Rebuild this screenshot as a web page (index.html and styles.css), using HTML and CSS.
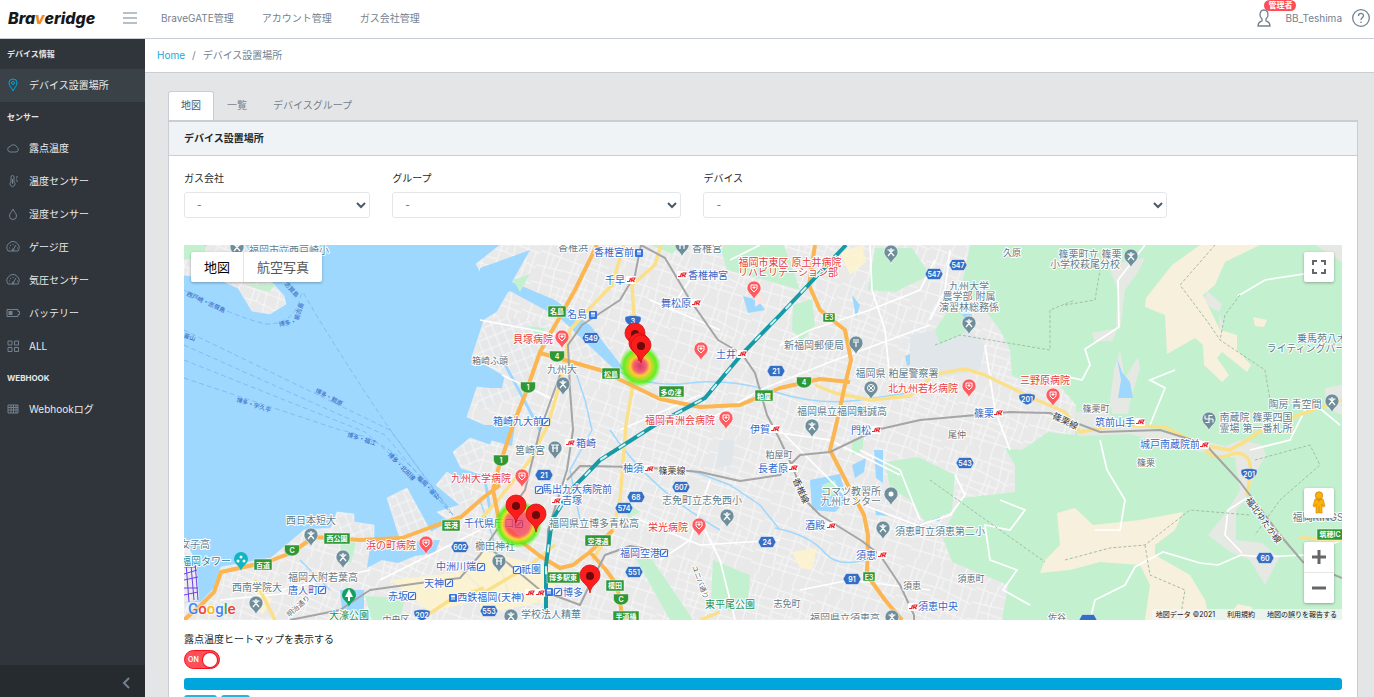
FILE: index.html
```html
<!DOCTYPE html>
<html lang="ja">
<head>
<meta charset="utf-8">
<title>デバイス設置場所 - Braveridge</title>
<link rel="stylesheet" href="styles.css">
</head>
<body>
<svg class="defs" aria-hidden="true">
  <defs>
    <pattern id="streets" width="74" height="62" patternUnits="userSpaceOnUse" patternTransform="rotate(18)">
      <rect width="74" height="62" fill="#e9e9e9"/>
      <path d="M0 9L74 12M0 24L40 21L74 27M0 41L33 39L74 44M0 54L74 52M8 0L10 62M22 0L19 24L24 62M36 0L34 62M47 0L50 27L47 62M60 0L63 30L59 62M70 12L69 44M10 31H34M34 33H62M24 47H47M47 5H70M14 9V24M41 12V21M54 27V44M29 39V54" fill="none" stroke="#f8f8f8" stroke-width="1"/>
    </pattern>
    <pattern id="grid" width="9" height="11" patternUnits="userSpaceOnUse" patternTransform="rotate(-22)">
      <rect width="9" height="11" fill="#e5e7e8"/>
      <path d="M0 1H9M1 0V11" stroke="#f8f8f8"/>
    </pattern>
    <radialGradient id="heat">
      <stop offset="0" stop-color="#f02850" stop-opacity=".75"/>
      <stop offset=".5" stop-color="#f93c4e" stop-opacity=".75"/>
      <stop offset=".64" stop-color="#ffd21f" stop-opacity=".9"/>
      <stop offset=".82" stop-color="#48f000" stop-opacity=".85"/>
      <stop offset="1" stop-color="#48f000" stop-opacity="0"/>
    </radialGradient>
    <radialGradient id="heat-small">
      <stop offset="0" stop-color="#d81850" stop-opacity=".85"/>
      <stop offset=".3" stop-color="#f0405a" stop-opacity=".8"/>
      <stop offset=".46" stop-color="#ffc81f" stop-opacity=".9"/>
      <stop offset=".78" stop-color="#48f000" stop-opacity=".85"/>
      <stop offset="1" stop-color="#48f000" stop-opacity="0"/>
    </radialGradient>
    <path id="drop" d="M0 10C-1 5-7 3-7-2A7 7 0 0 1 7-2C7 3 1 5 0 10Z"/>
    <g id="school"><use href="#drop" fill="#6f8e9b" stroke="#fff" stroke-width=".6"/><path d="M-3.500-4H3.500M0-6V-4M-2-4L3 2M2-4L-3 2" stroke="#fff" stroke-width="1.200" fill="none"/></g>
    <g id="shrine"><use href="#drop" fill="#6f8e9b" stroke="#fff" stroke-width=".6"/><path d="M-4-5H4M-3-2H3M-2-5V2M2-5V2" stroke="#fff" stroke-width="1.200"/></g>
    <g id="post"><use href="#drop" fill="#6f8e9b" stroke="#fff" stroke-width=".6"/><path d="M-3-5H3M-3-3H3M0-3V2" stroke="#fff" stroke-width="1.200"/></g>
    <g id="police"><use href="#drop" fill="#6f8e9b" stroke="#fff" stroke-width=".6"/><circle cy="-2" r="3.500" fill="none" stroke="#fff"/><path d="M-2-4L2 0M2-4L-2 0" stroke="#fff"/></g>
    <g id="temple"><use href="#drop" fill="#6f8e9b" stroke="#fff" stroke-width=".6"/><path d="M0-6V2M-4-2H4M0-5.500H3.500M4-2V1.500M0 1.500H-3.500M-4-2V-5.500" stroke="#fff" stroke-width="1.100" fill="none"/></g>
    <g id="spot"><use href="#drop" fill="#6f8e9b" stroke="#fff" stroke-width=".6"/><circle cy="-2" r="2.500" fill="#fff"/></g>
    <g id="hospital"><use href="#drop" fill="#ff5a5f" stroke="#fff" stroke-width=".6"/><path d="M-3-5H3V-1L0 2L-3-1ZM-1.500-2.500H1.500M0-4V-1" stroke="#fff" fill="none"/></g>
    <g id="jr"><rect x="-5" y="-4" width="10" height="8" rx="1" fill="#fff"/><path d="M-4 1.500H-1.500L-.5-2M0 2L1-2H4L3 0H1L3.500 2" stroke="#e8252b" stroke-width="1.100" fill="none"/></g>
    <g id="metro"><rect x="-3.500" y="-3.500" width="7" height="7" rx="1" fill="#fff" stroke="#3c6fd1" stroke-width="1.200"/><path d="M-2 2L2-2" stroke="#3c6fd1" stroke-width="1.200"/></g>
    <g id="train"><rect x="-4" y="-4" width="8" height="8" rx="1" fill="#3274e0"/><rect x="-2" y="-2.500" width="4" height="4" fill="#fff"/><path d="M-2 0H2" stroke="#3274e0"/></g>
    <path id="hex" d="M-9 0L-6-5.500H6L9 0L6 5.500H-6Z" fill="#356fc5" stroke="#fff" stroke-width=".5"/>
    <path id="ntl" d="M-8-4C-5-6 5-6 8-4C9 1 5 4 0 6C-5 4-9 1-8-4Z" fill="#356fc5" stroke="#fff" stroke-width=".5"/>
    <path id="exp" d="M-7.500-5H7.500V0C7 4 4 5.500 0 6C-4 5.500-7 4-7.500 0Z" fill="#2f9733" stroke="#fff" stroke-width=".5"/>
    <g id="marker"><path d="M0 0C-1-9-10-10-10-18A10 10 0 0 1 10-18C10-10 1-9 0 0Z" fill="#fb1c1c" stroke="#c61414" stroke-width=".8"/><circle cy="-17" r="4" fill="#6b0a0a"/></g>
    <g id="gauge"><path d="M2 11a6 6 0 1 1 10 0zM7 10l3-5M3 8h1M4 5l1 1M7 4v1M11 8h1"/><circle cx="7" cy="10" r="1"/></g>
  </defs>
</svg>

<header class="topbar">
  <a class="brand" href="#">Bra<span class="brand-v">v</span>eridge</a>
  <button class="menu-btn" type="button" aria-label="メニュー"><svg width="14" height="12" viewBox="0 0 14 12"><path d="M0 1h14M0 6h14M0 11h14"/></svg></button>
  <nav class="topnav"><a href="#">BraveGATE管理</a><a href="#">アカウント管理</a><a href="#">ガス会社管理</a></nav>
  <div class="user">
    <span class="person"><svg width="14" height="18" viewBox="0 0 14 18"><path d="M7 1C4 1 3 3 3 6C3 8 4 9 5 10V12C3 13 1 13 1 17H13C13 13 11 13 9 12V10C10 9 11 8 11 6C11 3 10 1 7 1Z"/></svg><span class="badge">管理者</span></span>
    <a href="#">BB_Teshima</a>
    <button type="button" class="help" aria-label="ヘルプ"><svg width="18" height="18" viewBox="0 0 18 18"><circle cx="9" cy="9" r="8.300"/><path d="M6.500 7C6.500 3.500 11.500 3.700 11.500 6.700C11.500 8.500 9 8.600 9 11M9 12.500V14"/></svg></button>
  </div>
</header>

<div class="shell">
  <aside class="sidebar">
    <nav class="side-nav">
      <h2>デバイス情報</h2>
      <a class="active" href="#"><svg viewBox="0 0 14 14"><path d="M7 13C6 10 3 8 3 5a4 4 0 0 1 8 0c0 3-3 5-4 8z"/><circle cx="7" cy="5" r="1.500"/></svg>デバイス設置場所</a>
      <h2>センサー</h2>
      <a href="#"><svg viewBox="0 0 14 14"><path d="M4 11h6a2.500 2.500 0 0 0 1-4.700A4 4 0 0 0 4 5.500A2.800 2.800 0 0 0 4 11z"/></svg>露点温度</a>
      <a href="#"><svg viewBox="0 0 14 14"><path d="M5 8V3a1.500 1.500 0 0 1 3 0v5a2.500 2.500 0 1 1-3 0zM10 3h2M10 5h1M10 7h2M6.500 5v5"/></svg>温度センサー</a>
      <a href="#"><svg viewBox="0 0 14 14"><path d="M7 2C6 5 3.500 6 3.500 9a3.500 3.500 0 0 0 7 0C10.500 6 8 5 7 2z"/></svg>湿度センサー</a>
      <a href="#"><svg viewBox="0 0 14 14"><use href="#gauge"/></svg>ゲージ圧</a>
      <a href="#"><svg viewBox="0 0 14 14"><use href="#gauge"/></svg>気圧センサー</a>
      <a href="#"><svg viewBox="0 0 14 14"><path d="M1 3.500h11v2h1.500v3H12v2H1z"/><path class="solid" d="M2.500 5h4v4h-4z"/></svg>バッテリー</a>
      <a href="#"><svg viewBox="0 0 14 14"><path d="M2 2h4v4H2zM8.500 2h4v4h-4zM2 8.500h4v4H2zM8.500 8.500h4v4h-4z"/></svg>ALL</a>
      <h2>WEBHOOK</h2>
      <a href="#"><svg viewBox="0 0 14 14"><path d="M2 3h10v8H2zM2 5.500h10M2 8h10M5 3v8M7.500 3v8M10 3v8"/></svg>Webhookログ</a>
    </nav>
    <button class="minimizer" type="button" aria-label="サイドバーを最小化"><svg width="8" height="12" viewBox="0 0 8 12"><path d="M7 1L2 6l5 5"/></svg></button>
  </aside>

  <main class="main">
    <nav class="breadcrumb"><a href="#">Home</a><span>/</span><span>デバイス設置場所</span></nav>
    <div class="container">
      <div class="tabs" role="tablist">
        <button class="tab selected" type="button" role="tab" aria-selected="true">地図</button>
        <button class="tab" type="button" role="tab">一覧</button>
        <button class="tab" type="button" role="tab">デバイスグループ</button>
      </div>
      <section class="card">
        <h1>デバイス設置場所</h1>
        <div class="card-body">
          <form class="filters">
            <div><label for="company">ガス会社</label><select id="company"><option>-</option></select></div>
            <div><label for="group">グループ</label><select id="group"><option>-</option></select></div>
            <div><label for="device">デバイス</label><select id="device"><option>-</option></select></div>
          </form>

          <div class="map">
            <svg class="map-art" viewBox="184 245 1158 375" role="img" aria-label="福岡周辺の地図">
              <rect x="184" y="245" width="1158" height="375" fill="#9fd8ff"/>
              <!-- land -->
              <g fill="url(#streets)" stroke="#f5f5f5" stroke-width=".5">
                <path d="M476 264L500 245H1342V620H184V603L201 602L214 588L221 567L271 558L284 547L304 530L331 528L337 512L354 514V522L374 525V545L401 542L387 498L407 488L431 532L450 522L437 512L460 505L436 485L447 472L466 484L484 475L461 468L453 452L470 438L490 445L497 430L467 417L477 387L502 390L505 376L472 357L484 320L497 312L509 291L511 275L484 278Z"/>
                <path d="M184 255L202 252L207 245H245L262 270L275 286L284 296L286 304L270 314L252 311L238 288L220 280L184 275Z"/>
                <path d="M184 545H187L196 562L199 600L184 602Z"/>
              </g>
              <g fill="url(#grid)">
                <path d="M498 316L560 325L542 357L528 395L477 410L480 388H505L508 374L475 356L486 322Z"/>
                <path d="M390 500L406 491L428 531L402 541ZM338 515H352V525L372 527V541L340 533ZM456 452L470 441L488 447L478 465L463 465ZM440 485L448 475L482 505L462 505ZM576 300L620 355L600 365L565 350Z"/>
              </g>
              <!-- inlets, lakes and rivers -->
              <g fill="#9fd8ff">
                <path d="M480 268L530 250L512 282L555 300Q575 315 590 325L625 370L613 368L560 318L510 291L480 310Z"/>
                <path d="M480 425H515L512 446L490 440ZM370 548L385 543L440 540L435 553L415 556L398 563L382 560L367 568ZM340 590H364V620H343ZM852 465L866 458L864 472L855 478ZM874 450H883V483L876 478ZM810 480L840 474L847 500L835 512L812 510ZM1000 307L1008 317L1022 322L1012 332L1000 320ZM905 356L920 350L916 362L907 366ZM743 296L758 300L765 310L748 313ZM953 314H972V324L956 322ZM852 295L860 305L856 318ZM875 508L888 516L876 515ZM931 520L940 516V521Z"/>
              </g>
              <g fill="none" stroke="#9fd8ff" stroke-width="3">
                <path d="M620 372Q650 388 690 383T775 392T860 400T930 390M575 370L585 400L592 430L570 470L580 520M775 528Q810 535 825 553T880 555M690 470L730 485L760 505L780 530M480 500L492 535L510 600M610 430Q650 490 720 530M300 560L330 590M463 570L484 592" stroke-width="1.500"/>
                <path d="M500 355L540 430M485 480L490 510"/>
              </g>
              <!-- neutral districts -->
              <g fill="#e0e6ea"><path d="M910 335L965 325L985 345L980 370L925 380L910 370ZM720 440L735 440L732 465L715 468Z"/></g>
              <g fill="#fff4cc" opacity=".8"><path d="M792 552L817 548L812 570L800 568ZM840 252L862 245L866 262L850 275ZM480 550L560 570L550 600L480 615ZM390 580L480 570V600L430 612ZM250 580L272 600L262 615Z"/></g>
              <g fill="#ffe4e2"><path d="M505 482L530 485V500L510 505ZM755 293L765 300L755 307Z"/></g>
              <!-- woods and parks -->
              <g fill="#c3f1cf">
                <path d="M970 245H1342V620H1002L1008 585L952 562L942 535L962 498L1015 492V465L1005 448L1022 450L1048 432L1075 435L1076 405L1058 384L1030 385L1012 375L1010 350L1000 330L985 310L962 285Z"/>
                <path d="M720 245H784L800 290L765 280L727 270ZM875 248H912L930 275L895 292L868 290ZM793 305L812 299L815 325L802 341L792 330ZM955 300L970 330L940 345L935 330ZM885 462L918 457L955 475L952 512L925 522L910 500L890 488ZM184 245H205V256L184 260ZM245 285L276 284L269 292ZM340 540L356 543L351 563L341 555ZM365 596L405 598L400 620H372ZM713 560L750 575L748 602L730 612L711 600ZM630 548L647 552L693 620H670ZM650 245H682L672 254ZM513 280L530 274L520 292ZM528 326L545 328L542 340ZM625 500L640 512L628 518ZM852 440L864 438L862 452L852 455ZM822 485L835 480L838 493L827 497Z"/>
              </g>
              <!-- valleys in the woods -->
              <g fill="#e6e8e4">
                <path d="M1076 412L1105 412L1130 424L1185 436L1225 446L1240 440L1262 445L1266 455L1253 478L1245 500L1236 510L1236 540L1262 543L1279 558L1265 585L1250 560L1230 552L1208 535L1228 510L1240 490L1235 458L1192 450L1130 434L1078 436ZM1110 270L1122 262L1145 258L1138 272L1125 290L1120 330L1116 325L1118 290ZM1092 333L1118 328L1112 341L1094 341ZM1110 400L1114 370L1120 350L1125 378L1138 357L1140 368L1130 402L1128 414H1112ZM1315 245H1342V262ZM1325 388L1342 385V415L1326 408ZM1203 303L1207 291L1222 304L1219 312ZM1219 315L1224 324L1220 332Z"/>
              </g>
              <path d="M1117 358L1122 372L1130 382L1133 398H1118L1121 380Z" fill="#9fd8ff"/>
              <g fill="#f7f0dc">
                <path d="M1200 245H1260L1225 262L1215 285L1203 295L1220 330L1237 335V350L1251 365L1247 372L1222 352L1217 358L1229 375L1222 382L1204 365L1203 345L1195 338L1167 354L1165 315L1145 307L1146 298L1172 265ZM1253 317L1267 320L1264 327L1255 326ZM1075 508L1093 525L1140 520L1183 512L1175 530L1155 545V555L1190 575L1205 600L1210 620H1145L1150 585L1140 565L1100 562L1070 570L1040 573L1045 560L1060 545L1057 513ZM1238 604L1252 607L1250 620H1225Z"/>
              </g>
              <!-- minor roads and trails -->
              <g fill="none" stroke="#fff" stroke-width="1.700">
                <path d="M1145 245L1132 262L1118 280L1119 327L1085 349L1090 365L1082 380L1060 375M1238 296L1265 280L1310 273L1330 260M1150 425L1165 388L1150 380L1175 370M1340 425L1310 400L1290 440L1250 450M1090 620L1095 600L1125 585L1135 567L1163 552L1200 563L1218 565L1241 555L1262 557L1304 555L1342 540M1247 498L1228 510L1225 535L1242 553M1100 440L1107 470L1125 500L1120 530L1095 530M1000 500L1025 510L1010 530L985 525L990 560L1017 570L1003 590L1030 605M955 475L965 495L950 515L920 525M480 320L560 335M502 375L555 400M860 450L900 470L920 520M870 245L872 290L885 330L890 380M935 260L920 290L870 310L810 330L780 345M950 250L945 290L930 320M985 345L995 410L1010 450M700 425L760 390L830 362L930 325M620 430L700 395M650 300L720 330M670 310L690 280M730 260L760 245M760 430L830 440L900 475M640 520L700 545L780 540M660 560L690 540L710 480M280 590L370 570M220 600L300 592M380 580L480 530M700 520L720 560L735 620M780 430L850 500L930 530M800 590L850 580L930 590"/>
              </g>
              <g fill="none" stroke="#a3bda7" stroke-dasharray="3 2">
                <path d="M1065 305L1095 300L1100 270L1092 250M1215 245L1180 285L1210 325L1220 340L1265 370L1270 400M1240 295L1225 315L1220 340M1065 560L1110 548L1145 545L1190 510L1250 515M1145 545L1150 575L1185 590L1180 620M1255 460L1310 445L1320 465L1280 500L1255 535M935 345L960 335L1050 350L1050 310L1075 300M930 480L1000 530L1045 562"/>
              </g>
              <!-- main roads -->
              <g fill="none" stroke="#fbe08a" stroke-width="3.500" stroke-linejoin="round">
                <path d="M624 245L612 285L590 308L570 330L561 380L548 425L530 460L498 500L480 520M661 245L655 265L632 285L635 330L632 390L626 425L620 500L613 530L592 560M480 595L530 565L555 545M815 385L835 393L870 400L910 396L935 374L965 369L985 375L1030 397L1065 412L1080 432L1120 425L1165 427L1200 445L1230 450L1247 440M1205 450Q1215 462 1235 453Q1253 453 1250 475L1247 496M1240 445L1270 425L1342 400M1300 538L1342 540M255 580L275 620M420 620L450 600L484 588M700 620L720 612"/>
              </g>
              <g fill="none" stroke="#fbb551" stroke-width="4" stroke-linejoin="round">
                <path d="M597 245L575 290L540 352L525 395L513 425L498 470L493 490L499 520L523 543L540 556L560 568L573 565L590 552L613 530M590 552L606 570L617 585L623 620M500 485L484 497L461 517L437 525L402 538L360 540L314 537L291 553L267 562L221 572L214 592L201 605L184 620M540 353L600 370L660 399L700 407L740 405L780 388L820 379L850 382M815 245L809 285L820 310L845 330L851 360L845 385L835 430L830 450L848 485L864 515L868 535L867 575L885 600L902 620"/>
              </g>
              <!-- railways -->
              <g fill="none" stroke="#a5a5a5" stroke-width="2" stroke-linejoin="round">
                <path d="M641 245L635 275L620 300L582 325L568 345L570 390L573 430L567 470L548 530L545 620M641 245L665 258L690 300L718 340L742 354L755 373L767 415L780 440L793 468L805 500L820 515L862 541L880 555L900 585L914 615V620M567 480L580 466L640 467L700 472L740 481L780 475L800 455L830 452L876 430L920 420L1010 412L1050 413L1100 432L1160 430L1205 444L1240 482L1280 535L1303 562L1342 578M560 375L540 430L525 490L500 525L480 555L460 578L420 583L370 590L340 610L290 620M480 540L540 590L580 605L592 580L605 555L630 546L664 552"/>
              </g>
              <path d="M846 245L780 315L742 354L705 398L655 425L600 460L571 490L552 520L546 565V610" fill="none" stroke="#169aa6" stroke-width="4"/>
              <path d="M846 245L780 315L742 354L705 398L655 425L600 460L571 490L552 520L546 565V610" fill="none" stroke="#d8f2f3" stroke-width="2" stroke-dasharray="0 14 8 0"/>
              <!-- ferry routes -->
              <g fill="none" stroke="#79b3f2" stroke-width=".8" stroke-dasharray="5 3">
                <path d="M184 290Q230 315 265 324Q295 325 301 295L303 292Q330 340 387 425L447 508M184 330L390 430L450 510M184 345L385 435L450 513M184 360L365 432L420 480L453 515M184 378L340 430Q400 440 453 515"/>
              </g>
              <g fill="none" stroke="#6a42ed" stroke-width="1"><path d="M184 567H196M184 574L197 570M184 580L198 577M184 588H198M184 595L198 592M186 563L189 602M191 565L194 600M195 562L198 600"/></g>

              <g class="ferry">
                <text transform="translate(205 304) rotate(25)">西戸崎・志賀島</text>
                <text transform="translate(253 407) rotate(18)">博多・宇久平</text>
                <text transform="translate(328 399) rotate(28)">博多・館原</text>
                <text transform="translate(361 441) rotate(17)">博多・福江</text>
                <text transform="translate(400 468) rotate(46)">博多・北田博</text>
                <text transform="translate(427 489) rotate(46)">福岡・釜山</text>
                <text transform="translate(189 339) rotate(20)">釜山</text>
                <text transform="translate(290 291) rotate(48)">志賀島</text>
                <text transform="translate(288 325) rotate(-10)">博多・</text>
                <text transform="translate(301 312) rotate(-72)">能古島</text>
              </g>
              <g class="poi">
                <text x="289" y="254">福岡市立西戸崎小</text><text x="573" y="251">香椎浜</text><text x="707" y="252">香椎宮</text>
                <text x="562" y="373">九州大</text><text x="814" y="349">新福岡郵便局</text><text x="897" y="377">福岡県 粕屋警察署</text>
                <text x="842" y="415">福岡県立福岡魁誠高</text><text x="969" y="290">九州大学</text><text x="969" y="300">農学部 附属</text><text x="969" y="311">演習林総務係</text>
                <text x="1090" y="258">篠栗町立 篠栗</text><text x="1085" y="268">小学校萩尾分校</text><text x="1295" y="408">陶房 青空間</text>
                <text x="1256" y="421">南蔵院 篠栗四国</text><text x="1256" y="432">霊場 第一番札所</text><text x="1327" y="342">乗馬苑八木山</text><text x="1311" y="352">ライティングパーク</text>
                <text x="530" y="454">筥崎宮</text><text x="702" y="504">志免町立志免西小</text><text x="594" y="527">福岡県立博多青松高</text><text x="495" y="550">櫛田神社</text>
                <text x="851" y="495">コマツ教習所</text><text x="851" y="505">九州センター</text><text x="940" y="535">須恵町立須恵第二小</text>
                <text x="311" y="524">西日本短大</text><text x="323" y="581">福岡大附若葉高</text><text x="257" y="591">西南学院大</text><text x="195" y="548">女子高</text>
                <text x="551" y="618">学校法人精華</text><text x="845" y="622">福岡県立須恵高</text><text x="1318" y="521">福岡KINGS</text>
              </g>
              <g class="poi teal"><text x="206" y="565">福岡タワー</text></g>
              <g class="town">
                <text x="1012" y="256">久原</text><text x="1096" y="412">篠栗町</text><text x="1146" y="466">篠栗</text><text x="957" y="438">尾仲</text><text x="779" y="458">粕屋町</text>
                <text x="912" y="589">須恵</text><text x="971" y="582">須恵町</text><text x="787" y="607">志免町</text><text x="1057" y="621">佐谷</text><text x="490" y="364">箱崎ふ頭</text><text x="396" y="623">中央区</text>
              </g>
              <g class="hosp">
                <text x="533" y="343">貝塚病院</text><text x="680" y="424">福岡青洲会病院</text><text x="923" y="392">北九州若杉病院</text><text x="1045" y="384">三野原病院</text>
                <text x="481" y="482">九州大学病院</text><text x="391" y="549">浜の町病院</text><text x="668" y="531">栄光病院</text><text x="790" y="266">福岡市東区 原土井病院</text><text x="788" y="276">リハビリテーション部</text>
              </g>
              <g class="station">
                <text x="614" y="256">香椎宮前</text><text x="615" y="284">千早</text><text x="708" y="279">香椎神宮</text><text x="676" y="307">舞松原</text><text x="577" y="318">名島</text>
                <text x="726" y="358">土井</text><text x="518" y="425">箱崎九大前</text><text x="586" y="447">箱崎</text><text x="760" y="433">伊賀</text><text x="984" y="417">篠栗</text>
                <text x="861" y="434">門松</text><text x="1115" y="426">筑前山手</text><text x="1170" y="448">城戸南蔵院前</text><text x="633" y="472">柚須</text><text x="572" y="504">吉塚</text>
                <text x="577" y="493">馬出九大病院前</text><text x="489" y="527">千代県庁口</text><text x="640" y="557">福岡空港</text><text x="531" y="573">祇園</text><text x="456" y="570">中洲川端</text>
                <text x="434" y="587">天神</text><text x="303" y="594">唐人町</text><text x="398" y="600">赤坂</text><text x="491" y="601">西鉄福岡(天神)</text><text x="573" y="596">博多</text>
                <text x="773" y="472">長者原</text><text x="815" y="529">酒殿</text><text x="866" y="559">須恵</text><text x="938" y="610">須恵中央</text>
              </g>
              <g class="park"><text x="730" y="608">東平尾公園</text><text x="349" y="619">大濠公園</text></g>
              <g class="rail">
                <text x="672" y="474">篠栗線</text><text transform="translate(1064 424) rotate(25)">篠栗線</text><text transform="translate(798 492) rotate(66)">香椎線</text><text transform="translate(1261 522) rotate(54)">福北ゆたか線</text>
                <text class="street" transform="translate(698 583) rotate(70)">ユニバ通り</text><text class="street" transform="translate(300 608) rotate(-42)">明治通り</text>
              </g>

              <use href="#jr" x="631" y="280"/><use href="#jr" x="682" y="275"/><use href="#jr" x="696" y="303"/><use href="#jr" x="742" y="354"/><use href="#jr" x="570" y="443"/><use href="#jr" x="775" y="429"/><use href="#jr" x="998" y="413"/><use href="#jr" x="876" y="430"/><use href="#jr" x="1140" y="422"/><use href="#jr" x="1204" y="445"/><use href="#jr" x="649" y="469"/><use href="#jr" x="556" y="501"/><use href="#jr" x="793" y="468"/><use href="#jr" x="831" y="526"/><use href="#jr" x="882" y="555"/><use href="#jr" x="913" y="607"/><use href="#jr" x="530" y="593"/><use href="#jr" x="540" y="593"/>
              <use href="#metro" x="546" y="422"/><use href="#metro" x="539" y="490"/><use href="#metro" x="519" y="524"/><use href="#metro" x="664" y="553"/><use href="#metro" x="517" y="570"/><use href="#metro" x="481" y="567"/><use href="#metro" x="449" y="583"/><use href="#metro" x="322" y="590"/><use href="#metro" x="412" y="596"/><use href="#metro" x="558" y="592"/>
              <use href="#train" x="639" y="253"/><use href="#train" x="593" y="315"/><use href="#train" x="549" y="592"/><use href="#train" x="453" y="598"/>

              <use href="#school" x="237" y="249"/><use href="#shrine" x="682" y="247"/><use href="#school" x="891" y="254"/><use href="#post" x="856" y="345"/><use href="#school" x="563" y="386"/><use href="#school" x="969" y="325"/><use href="#school" x="1131" y="258"/><use href="#police" x="871" y="390"/><use href="#school" x="812" y="428"/><use href="#school" x="1332" y="403"/><use href="#temple" x="1209" y="421"/><use href="#shrine" x="555" y="450"/><use href="#school" x="727" y="518"/><use href="#shrine" x="499" y="563"/><use href="#spot" x="891" y="496"/><use href="#school" x="883" y="530"/><use href="#school" x="311" y="537"/><use href="#school" x="343" y="559"/><use href="#school" x="256" y="605"/><use href="#school" x="511" y="618"/><use href="#school" x="892" y="619"/>
              <use href="#hospital" x="562" y="339"/><use href="#hospital" x="754" y="290"/><use href="#hospital" x="701" y="351"/><use href="#hospital" x="726" y="420"/><use href="#hospital" x="969" y="388"/><use href="#hospital" x="1053" y="397"/><use href="#hospital" x="522" y="478"/><use href="#hospital" x="426" y="545"/><use href="#hospital" x="699" y="527"/>
              <use href="#drop" x="241" y="561" fill="#12b5c4"/><g fill="#fff"><circle cx="241" cy="557" r="1.500"/><circle cx="238" cy="561" r="1.500"/><circle cx="244" cy="561" r="1.500"/></g>
              <use href="#drop" x="349" y="597" fill="#14a05e"/><path d="M349 589L345 597H348V601H350V597H353Z" fill="#fff"/>

              <g fill="#2f9733" stroke="#fff" stroke-width=".5">
                <rect x="548" y="306" width="18" height="11"/><rect x="602" y="368" width="18" height="11"/><rect x="659" y="386" width="25" height="11"/><rect x="755" y="390" width="18" height="11"/><rect x="823" y="313" width="12" height="9"/><rect x="585" y="535" width="26" height="11"/><rect x="547" y="572" width="33" height="11"/><rect x="606" y="580" width="18" height="11"/><rect x="613" y="611" width="26" height="11"/><rect x="442" y="520" width="18" height="11"/><rect x="324" y="533" width="26" height="11"/><rect x="254" y="559" width="18" height="11"/><rect x="863" y="572" width="12" height="9"/><rect x="1317" y="529" width="26" height="11"/>
              </g>
              <use href="#exp" x="557" y="356"/><use href="#exp" x="528" y="387"/><use href="#exp" x="804" y="382"/><use href="#exp" x="501" y="460"/><use href="#exp" x="621" y="599"/><use href="#exp" x="292" y="550"/>
              <use href="#hex" x="591" y="338"/><use href="#ntl" x="633" y="321"/><use href="#hex" x="776" y="371"/><use href="#hex" x="934" y="274"/><use href="#hex" x="958" y="265"/><use href="#ntl" x="1027" y="399"/><use href="#hex" x="544" y="475"/><use href="#hex" x="636" y="497"/><use href="#hex" x="681" y="487"/><use href="#hex" x="624" y="508"/><use href="#hex" x="634" y="572"/><use href="#hex" x="767" y="542"/><use href="#hex" x="965" y="463"/><use href="#hex" x="852" y="579"/><use href="#hex" x="460" y="547"/><use href="#hex" x="489" y="611"/><use href="#ntl" x="422" y="615"/><use href="#ntl" x="1249" y="474"/><use href="#hex" x="1265" y="558"/><use href="#hex" x="1088" y="620"/>
              <g class="sign">
                <text x="557" y="314">名島</text><text x="611" y="377">松島</text><text x="671" y="395">多の津</text><text x="764" y="399">粕屋</text><text x="829" y="320">E3</text><text x="598" y="544">空港通</text><text x="563" y="580">博多駅東</text><text x="615" y="588">榎田</text><text x="626" y="619">半道橋</text><text x="451" y="528">築港</text><text x="337" y="541">西公園</text><text x="263" y="568">百道</text><text x="869" y="580">E3</text><text x="1330" y="537">筑穂IC</text>
                <text x="557" y="359">4</text><text x="528" y="390">1</text><text x="804" y="385">4</text><text x="501" y="463">1</text><text x="621" y="602">C</text><text x="292" y="553">C</text>
                <text x="591" y="341">549</text><text x="633" y="324">3</text><text x="776" y="374">21</text><text x="934" y="277">547</text><text x="958" y="268">547</text><text x="1027" y="402">201</text><text x="544" y="478">21</text><text x="636" y="500">68</text><text x="681" y="490">607</text><text x="624" y="511">574</text><text x="634" y="575">551</text><text x="767" y="545">24</text><text x="965" y="466">543</text><text x="852" y="582">91</text><text x="460" y="550">602</text><text x="489" y="614">553</text><text x="422" y="618">202</text><text x="1249" y="477">201</text><text x="1265" y="561">60</text>
              </g>
              <!-- heat map and device markers -->
              <circle cx="640" cy="366" r="21" fill="url(#heat-small)"/><circle cx="518" cy="524" r="24" fill="url(#heat)"/>
              <use href="#marker" x="635" y="351"/><use href="#marker" x="639" y="361"/><use href="#marker" x="641" y="363"/><use href="#marker" x="516" y="523"/><use href="#marker" x="536" y="532"/><use href="#marker" x="590" y="593"/>
            </svg>
            <div class="map-types"><button type="button" class="on">地図</button><button type="button">航空写真</button></div>
            <button class="map-btn fullscreen" type="button" aria-label="全画面表示"><svg width="16" height="16" viewBox="0 0 16 16"><path d="M2 6V2h4M10 2h4v4M14 10v4h-4M6 14H2v-4"/></svg></button>
            <div class="map-tools">
              <button class="map-btn" type="button" aria-label="ストリートビュー"><svg width="14" height="24" viewBox="0 0 14 24"><path d="M3 8H11L13 15L11 16L10 13V22H7.500V16H6.500V22H4V13L3 16L1 15Z" fill="#fbb206" stroke="#d98a00" stroke-width=".7"/><circle cx="7" cy="4.500" r="3.700" fill="#fbb206" stroke="#c47a06" stroke-width=".7"/><path d="M4 8H10L7 11Z" fill="#f18b13"/></svg></button>
              <div class="zoom">
                <button type="button" aria-label="拡大"><svg width="14" height="14" viewBox="0 0 14 14"><path d="M0 7h14M7 0v14"/></svg></button>
                <button type="button" aria-label="縮小"><svg width="14" height="14" viewBox="0 0 14 14"><path d="M0 7h14"/></svg></button>
              </div>
            </div>
            <div class="google"><span class="g-blue">G</span><span class="g-red">o</span><span class="g-yellow">o</span><span class="g-blue">g</span><span class="g-green">l</span><span class="g-red">e</span></div>
            <div class="credits"><span>地図データ ©2021</span><a href="#">利用規約</a><a href="#">地図の誤りを報告する</a></div>
          </div>

          <label class="heat-label" for="heatmap">露点温度ヒートマップを表示する</label>
          <label class="switch"><input id="heatmap" type="checkbox" checked><span class="track">ON</span></label>
          <div class="bar"></div>
          <div class="actions"><button type="button" aria-label="前へ"></button><button type="button" aria-label="次へ"></button></div>
        </div>
      </section>
    </div>
  </main>
</div>
</body>
</html>
```

FILE: styles.css
```css
* { box-sizing: border-box; }
body {
  margin: 0;
  height: 100vh;
  display: flex;
  flex-direction: column;
  overflow: hidden;
  font: 10px/16px Inter, "Noto Sans CJK JP", sans-serif;
  color: #23282c;
  background: #e4e5e6;
}
a { color: inherit; text-decoration: none; }
button { padding: 0; border: 0; background: none; font: inherit; color: inherit; cursor: pointer; }
svg { display: block; }
.defs { position: absolute; width: 0; height: 0; }

.topbar {
  flex: none;
  height: 39px;
  display: flex;
  align-items: center;
  padding: 0 4px 2px 8px;
  background: #fff;
  border-bottom: 1px solid #c8ced3;
  color: #73818f;
}
.brand { width: 115px; font-size: 16px; font-weight: 800; font-style: italic; color: #15181b; }
.brand-v { color: #f58a1f; }
.menu-btn path { stroke: #73818f; stroke-width: 1.2; }
.topnav { display: flex; gap: 28px; margin-left: 24px; }
.user { margin-left: auto; display: flex; align-items: center; gap: 10px; }
.user svg { fill: none; stroke: #73818f; stroke-width: 1.3; }
.person { position: relative; margin-right: 4px; }
.badge {
  position: absolute;
  left: 7px;
  top: -9px;
  padding: 0 4px;
  border-radius: 6px;
  background: #ff4d55;
  color: #fff;
  font-size: 8px;
  font-weight: 700;
  line-height: 11px;
  white-space: nowrap;
}

.shell { flex: 1; min-height: 0; display: flex; }
.sidebar { flex: none; width: 145px; display: flex; flex-direction: column; background: #2f353a; color: #fff; }
.side-nav { flex: 1; }
.side-nav h2 { margin: 0; padding: 7px; font-size: 8px; line-height: 16px; font-weight: 700; color: #e4e7ea; }
.side-nav a { display: flex; align-items: center; gap: 9px; height: 33px; padding: 0 6px 2px; color: #e9ebec; }
.side-nav .active { background: #3a4248; }
.side-nav svg { width: 14px; height: 14px; fill: none; stroke: #73818f; stroke-width: 1; }
.side-nav .active svg { stroke: #00a5dc; }
.side-nav .solid { fill: #73818f; stroke: none; }
.minimizer { height: 32px; display: flex; justify-content: flex-end; align-items: center; padding: 4px 15px 0; background: #262b2f; }
.minimizer svg { fill: none; stroke: #73818f; stroke-width: 2; }

.main { flex: 1; min-width: 0; display: flex; flex-direction: column; overflow: hidden; }
.breadcrumb { flex: none; display: flex; gap: 7px; padding: 8px 12px 9px; background: #fff; border-bottom: 1px solid #c8ced3; color: #73818f; }
.breadcrumb a { color: #20a8d8; }
.container { padding: 18px 16px 0 23px; }
.tabs { display: flex; }
.tab { padding: 5px 12px 7px; border: 1px solid transparent; border-bottom: 0; color: #73818f; }
.tab.selected { background: #fff; border-color: #c8ced3; border-radius: 3px 3px 0 0; color: #4c545c; }
.card { background: #fff; border: 1px solid #c8ced3; border-top-width: 2px; }
.card h1 { margin: 0; padding: 8px 15px 9px; font-size: 10px; line-height: 16px; font-weight: 600; background: #f0f3f5; border-bottom: 1px solid #c8ced3; }
.card-body { padding: 14px 15px; }

.filters { display: grid; grid-template-columns: 186fr 289fr 463fr 153fr; gap: 22px; margin-bottom: 27px; }
.filters label { display: block; margin-bottom: 6px; }
.filters select {
  display: block;
  width: 100%;
  height: 26px;
  padding: 0 12px;
  border: 1px solid #e4e7ea;
  border-radius: 3px;
  appearance: none;
  font: inherit;
  color: #5c6873;
  background: #fff url("data:image/svg+xml,%3Csvg xmlns='http://www.w3.org/2000/svg' width='10' height='7' viewBox='0 0 10 7'%3E%3Cpath d='M1 1l4 4 4-4' fill='none' stroke='%234c5a66' stroke-width='2'/%3E%3C/svg%3E") no-repeat right 3px center;
}

.map { position: relative; overflow: hidden; margin-bottom: 11px; }
.map-art { width: 100%; height: auto; font-size: 10px; text-anchor: middle; }
.map-art text { paint-order: stroke; stroke: #fff; stroke-width: 2px; stroke-linejoin: round; }
.poi { fill: #5f7d8c; }
.teal { fill: #25849b; }
.town { fill: #6b7075; font-size: 9px; }
.hosp { fill: #e83b40; }
.station { fill: #3568c9; }
.park { fill: #259153; }
.rail { fill: #3a3a3a; font-size: 9px; }
.rail .street { fill: #666; font-size: 7px; }
.map-art .ferry text { fill: #3e73c9; font-size: 6px; font-weight: 500; stroke: none; }
.map-art .sign text { fill: #fff; font-size: 7px; font-weight: 600; stroke: none; }

.map-types { position: absolute; left: 7px; top: 7px; display: flex; background: #fff; border-radius: 2px; box-shadow: 0 1px 3px rgba(0, 0, 0, .3); }
.map-types button { height: 30px; padding: 0 13px; font-size: 13px; color: #565656; }
.map-types .on { color: #000; border-right: 1px solid #e6e6e6; }
.map-btn { width: 30px; height: 30px; display: grid; place-items: center; background: #fff; border-radius: 2px; box-shadow: 0 1px 3px rgba(0, 0, 0, .3); }
.fullscreen { position: absolute; right: 8px; top: 7px; }
.fullscreen path { fill: none; stroke: #666; stroke-width: 2; }
.map-tools { position: absolute; right: 8px; bottom: 17px; display: grid; gap: 24px; }
.zoom { background: #fff; border-radius: 2px; box-shadow: 0 1px 3px rgba(0, 0, 0, .3); }
.zoom button { width: 30px; height: 30px; display: grid; place-items: center; }
.zoom button + button { height: 31px; border-top: 1px solid #e6e6e6; }
.zoom path { stroke: #666; stroke-width: 3; }
.google { position: absolute; left: 4px; bottom: 1px; font: 500 15px/20px Roboto, sans-serif; text-shadow: 0 0 2px #fff, 0 0 2px #fff; }
.g-blue { color: #4285f4; }
.g-red { color: #ea4335; }
.g-yellow { color: #fbbc05; }
.g-green { color: #34a853; }
.credits { position: absolute; right: 0; bottom: 0; display: flex; gap: 12px; padding: 0 5px 0 4px; font-size: 7px; line-height: 11px; color: #111; background: rgba(245, 245, 245, .75); }

.heat-label { display: block; margin-bottom: 3px; }
.switch { display: block; width: 36px; height: 19px; }
.switch input { position: absolute; opacity: 0; }
.track { display: flex; align-items: center; justify-content: space-between; height: 19px; padding: 0 2px 0 3px; border: 1px solid #f5101f; border-radius: 10px; background: #ff5058; color: #fff; font-size: 7px; font-weight: 600; }
.track::after { content: ""; width: 14px; height: 14px; border-radius: 50%; background: #fff; box-shadow: 0 0 0 1px #f5101f; }
.bar { height: 12px; margin: 9px 0 5px; border-radius: 3px; background: #00a5dc; }
.actions { display: flex; gap: 4px; }
.actions button { width: 33px; height: 24px; border-radius: 3px; background: #20b8e0; }
.actions button + button { width: 29px; }
```
